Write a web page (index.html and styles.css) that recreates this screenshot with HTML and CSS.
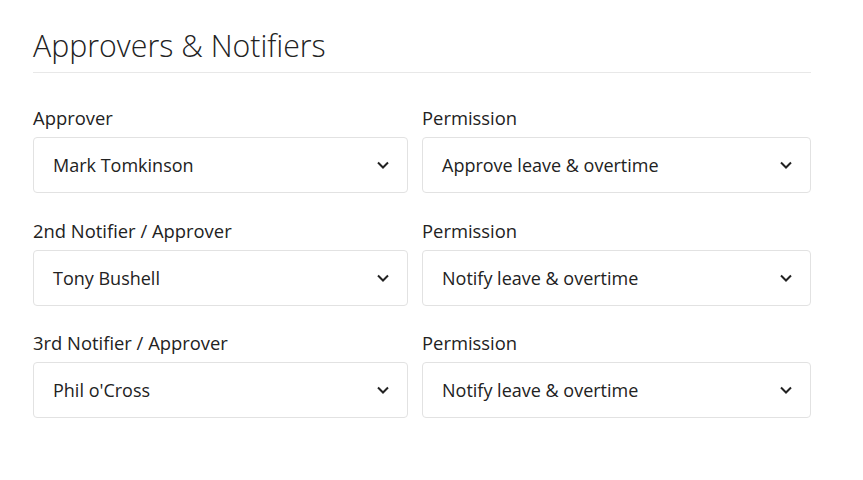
FILE: index.html
```html
<!DOCTYPE html>
<html lang="en">
<head>
    <meta charset="UTF-8">
    <meta name="viewport" content="width=device-width, initial-scale=1.0">
    <title>Approvers &amp; Notifiers</title>
    <link rel="stylesheet" href="styles.css">
</head>
<body>

<div class="panel">
    <h2 class="panel-title">Approvers &amp; Notifiers</h2>

    <div class="approver-grid">
        <div class="field">
            <label>Approver</label>
            <div class="select-box">
                <span>Mark Tomkinson</span>
                <svg class="chevron" width="12" height="8" viewBox="0 0 12 8"><path d="M1 1.5l5 5 5-5" fill="none" stroke="#222" stroke-width="2"/></svg>
            </div>
        </div>
        <div class="field">
            <label>Permission</label>
            <div class="select-box">
                <span>Approve leave &amp; overtime</span>
                <svg class="chevron" width="12" height="8" viewBox="0 0 12 8"><path d="M1 1.5l5 5 5-5" fill="none" stroke="#222" stroke-width="2"/></svg>
            </div>
        </div>

        <div class="field">
            <label>2nd Notifier / Approver</label>
            <div class="select-box">
                <span>Tony Bushell</span>
                <svg class="chevron" width="12" height="8" viewBox="0 0 12 8"><path d="M1 1.5l5 5 5-5" fill="none" stroke="#222" stroke-width="2"/></svg>
            </div>
        </div>
        <div class="field">
            <label>Permission</label>
            <div class="select-box">
                <span>Notify leave &amp; overtime</span>
                <svg class="chevron" width="12" height="8" viewBox="0 0 12 8"><path d="M1 1.5l5 5 5-5" fill="none" stroke="#222" stroke-width="2"/></svg>
            </div>
        </div>

        <div class="field">
            <label>3rd Notifier / Approver</label>
            <div class="select-box">
                <span>Phil o'Cross</span>
                <svg class="chevron" width="12" height="8" viewBox="0 0 12 8"><path d="M1 1.5l5 5 5-5" fill="none" stroke="#222" stroke-width="2"/></svg>
            </div>
        </div>
        <div class="field">
            <label>Permission</label>
            <div class="select-box">
                <span>Notify leave &amp; overtime</span>
                <svg class="chevron" width="12" height="8" viewBox="0 0 12 8"><path d="M1 1.5l5 5 5-5" fill="none" stroke="#222" stroke-width="2"/></svg>
            </div>
        </div>
    </div>
</div>

</body>
</html>
```

FILE: styles.css
```css
body {
    font-family: "Open Sans", Arial, sans-serif;
    margin: 0;
    background-color: #fff;
    color: #222;
}
.panel {
    padding: 25px 52px 0 33px;
}
.panel-title {
    font-size: 30.3px;
    font-weight: 300;
    line-height: 41px;
    margin: 0;
    padding-bottom: 6px;
    border-bottom: 1px solid #e8e8e8;
}
.approver-grid {
    display: grid;
    grid-template-columns: 375px 1fr;
    column-gap: 14px;
    row-gap: 25.5px;
    margin-top: 33px;
}
.field label {
    display: block;
    font-size: 18.4px;
    line-height: 24px;
    margin-bottom: 7px;
}
.select-box {
    display: flex;
    align-items: center;
    justify-content: space-between;
    height: 54px;
    padding: 0 18px 0 19px;
    border: 1px solid #e2e2e2;
    border-radius: 4px;
    font-size: 18px;
}
.chevron {
    display: block;
}
```
